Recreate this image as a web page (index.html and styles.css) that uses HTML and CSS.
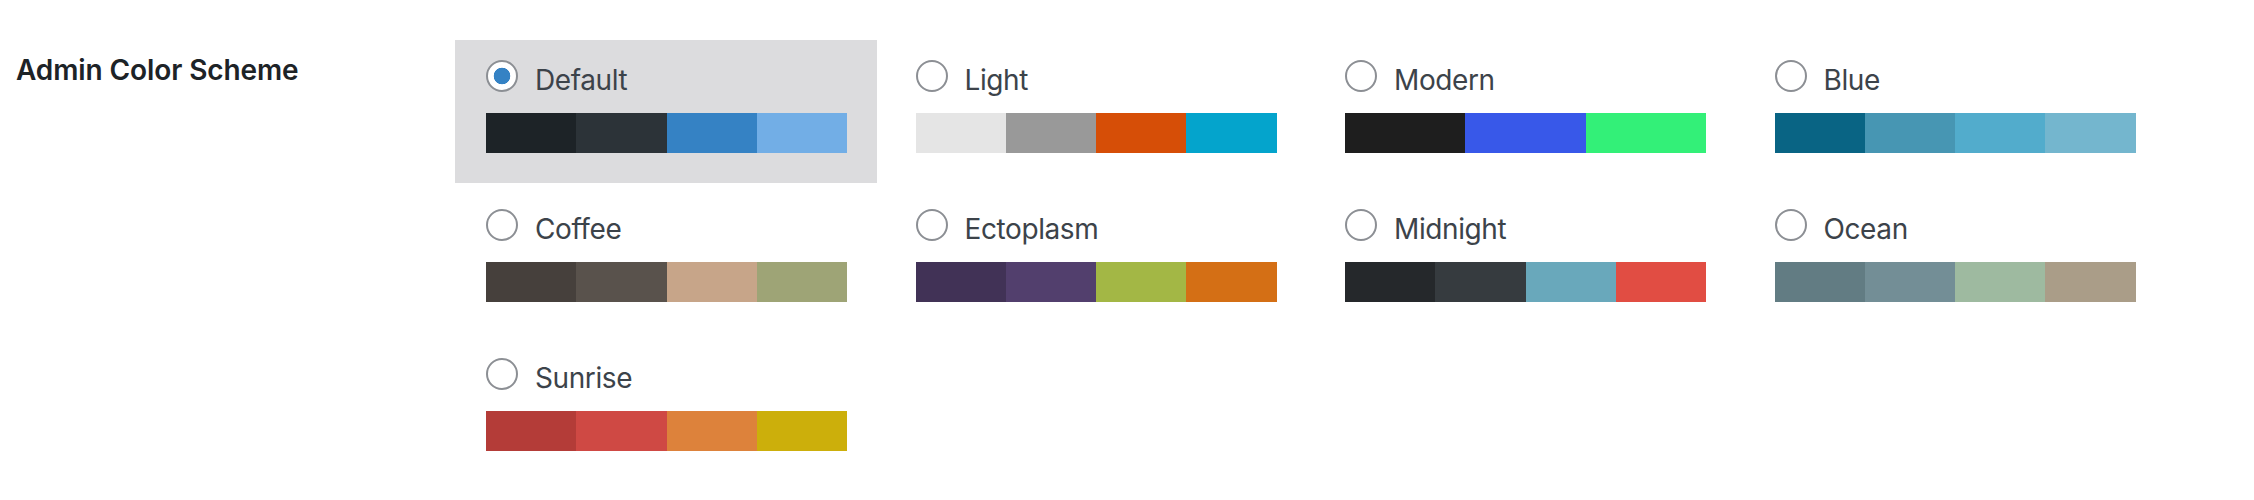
FILE: index.html
```html
<!DOCTYPE html>
<html lang="en">
<head>
<meta charset="utf-8">
<title>Admin Color Scheme</title>
<link rel="stylesheet" href="styles.css">
</head>
<body>
<div class="form-row">
  <div class="row-label">Admin Color Scheme</div>
  <fieldset class="options">
    <label class="color-option selected">
      <span class="option-head"><input type="radio" name="scheme" class="radio" checked><span class="name">Default</span></span>
      <span class="palette"><span class="c" style="background:#1d2327"></span><span class="c" style="background:#2c3338"></span><span class="c" style="background:#3582c4"></span><span class="c" style="background:#72aee6"></span></span>
    </label>
    <label class="color-option">
      <span class="option-head"><input type="radio" name="scheme" class="radio"><span class="name">Light</span></span>
      <span class="palette"><span class="c" style="background:#e5e5e5"></span><span class="c" style="background:#999999"></span><span class="c" style="background:#d64e07"></span><span class="c" style="background:#04a4cc"></span></span>
    </label>
    <label class="color-option">
      <span class="option-head"><input type="radio" name="scheme" class="radio"><span class="name">Modern</span></span>
      <span class="palette"><span class="c" style="background:#1e1e1e"></span><span class="c" style="background:#3858e9"></span><span class="c" style="background:#33f078"></span></span>
    </label>
    <label class="color-option">
      <span class="option-head"><input type="radio" name="scheme" class="radio"><span class="name">Blue</span></span>
      <span class="palette"><span class="c" style="background:#096484"></span><span class="c" style="background:#4796b3"></span><span class="c" style="background:#52accc"></span><span class="c" style="background:#74b6ce"></span></span>
    </label>
    <label class="color-option">
      <span class="option-head"><input type="radio" name="scheme" class="radio"><span class="name">Coffee</span></span>
      <span class="palette"><span class="c" style="background:#46403c"></span><span class="c" style="background:#59524c"></span><span class="c" style="background:#c7a589"></span><span class="c" style="background:#9ea476"></span></span>
    </label>
    <label class="color-option">
      <span class="option-head"><input type="radio" name="scheme" class="radio"><span class="name">Ectoplasm</span></span>
      <span class="palette"><span class="c" style="background:#413256"></span><span class="c" style="background:#523f6d"></span><span class="c" style="background:#a3b745"></span><span class="c" style="background:#d46f15"></span></span>
    </label>
    <label class="color-option">
      <span class="option-head"><input type="radio" name="scheme" class="radio"><span class="name">Midnight</span></span>
      <span class="palette"><span class="c" style="background:#25282b"></span><span class="c" style="background:#363b3f"></span><span class="c" style="background:#69a8bb"></span><span class="c" style="background:#e14d43"></span></span>
    </label>
    <label class="color-option">
      <span class="option-head"><input type="radio" name="scheme" class="radio"><span class="name">Ocean</span></span>
      <span class="palette"><span class="c" style="background:#627c83"></span><span class="c" style="background:#738e96"></span><span class="c" style="background:#9ebaa0"></span><span class="c" style="background:#aa9d88"></span></span>
    </label>
    <label class="color-option">
      <span class="option-head"><input type="radio" name="scheme" class="radio"><span class="name">Sunrise</span></span>
      <span class="palette"><span class="c" style="background:#b43c38"></span><span class="c" style="background:#cf4944"></span><span class="c" style="background:#dd823b"></span><span class="c" style="background:#ccaf0b"></span></span>
    </label>
  </fieldset>
</div>
</body>
</html>
```

FILE: styles.css
```css
html, body {
  margin: 0;
  padding: 0;
  background: #ffffff;
}

body {
  font-family: Inter, "Noto Sans", "Liberation Sans", sans-serif;
  color: #3c434a;
}

.form-row {
  display: flex;
  align-items: flex-start;
  padding-left: 16px;
}

.row-label {
  width: 439px;
  flex: none;
  box-sizing: border-box;
  padding-top: 53px;
  font-size: 28px;
  font-weight: 600;
  line-height: 34px;
  color: #1d2327;
  letter-spacing: -0.1px;
}

.options {
  margin: 40px 0 0 0;
  padding: 0;
  border: 0;
  min-width: 0;
  display: grid;
  grid-template-columns: repeat(4, 422px);
  column-gap: 7.5px;
  row-gap: 6px;
}

.color-option {
  display: flex;
  flex-direction: column;
  box-sizing: border-box;
  width: 422px;
  height: 143px;
  padding: 10px 30px 30px 31px;
  cursor: pointer;
}

.color-option.selected {
  background: #dcdcde;
}

.option-head {
  display: flex;
  align-items: flex-start;
  height: 53px;
}

.radio {
  appearance: none;
  -webkit-appearance: none;
  flex: none;
  width: 32px;
  height: 32px;
  margin: 10px 17px 0 0;
  border: 2px solid #8c8f94;
  border-radius: 50%;
  background: #ffffff;
  box-sizing: border-box;
}

.radio:checked {
  background: radial-gradient(circle, #3582c4 0 8px, #ffffff 8.6px);
}

.name {
  font-size: 28px;
  line-height: 34px;
  margin-top: 13px;
  letter-spacing: -0.4px;
  color: #3c434a;
}

.palette {
  display: flex;
  height: 40px;
  width: 361px;
  margin-top: 10px;
}

.palette .c {
  flex: 1;
}
```
